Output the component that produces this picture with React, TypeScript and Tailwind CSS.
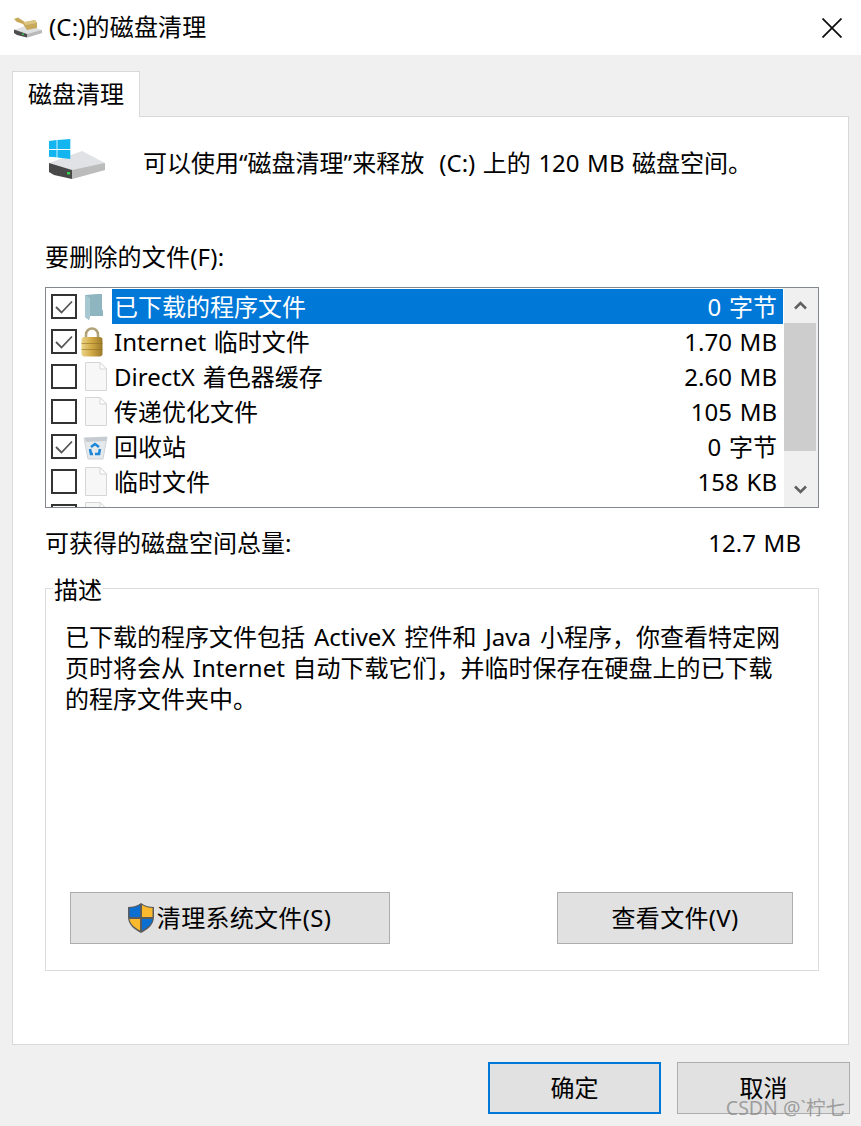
const font = "font-['Noto_Sans','Noto_Sans_CJK_SC',sans-serif]"

function CleanupIcon() {
  return (
    <svg width="30" height="21" viewBox="0 0 30 21" className="shrink-0">
      <path d="M1 13 L15 8 L29 13 L29 16 L15 20.500 L1 16 Z" fill="#dfe0e2" />
      <path d="M1 12.500 L14 17 L14 20.500 L4 18 L1 16 Z" fill="#4d4d4d" />
      <path d="M14 17 L29 13 L29 16 L14 20.500 Z" fill="#b9b9b9" />
      <rect x="9" y="16.500" width="2" height="1.500" fill="#39c24a" />
      <path d="M1 2 L5 0.500 L12 5 L22 3 L24 6 L24 11 L14 13 L10 7 L4 5 Z" fill="#c7a95c" />
      <path d="M10 5.500 L22 3 L24 6 L13 8 Z" fill="#dcc583" />
    </svg>
  )
}

function DriveIcon() {
  return (
    <svg width="58" height="41" viewBox="0 0 58 41" className="shrink-0">
      <path d="M1 24 L34 12 L57 24 L57 31 L24 40 L1 33 Z" fill="#e1e2e5" />
      <path d="M1 24 L24 31 L24 40 L6 36 L1 33 Z" fill="#484848" />
      <path d="M24 31 L57 24 L57 31 L24 40 Z" fill="#bcbcbc" />
      <rect x="19" y="33" width="3" height="2.500" fill="#35d04a" />
      <path d="M1 2 L8.600 1 L8.600 10 L1 10 Z" fill="#12b5f0" />
      <path d="M9.400 1 L22.300 0 L22.300 10 L9.400 10 Z" fill="#12b5f0" />
      <path d="M1 11 L8.600 11 L8.600 18.300 L1 17.800 Z" fill="#12b5f0" />
      <path d="M9.400 11 L22.300 11 L22.300 20 L9.400 18.500 Z" fill="#12b5f0" />
    </svg>
  )
}

function FolderIcon() {
  return (
    <svg width="18" height="26" viewBox="0 0 18 26" className="ml-[8px]">
      <path d="M0 1 L12 0 L17 0 L17 15 L18 17 L18 22 L5 22 L4 26 L0 23 Z" fill="#8fb6c0" />
      <path d="M0 1 L5 4 L5 22 L4 26 L0 23 Z" fill="#a7c8d0" />
    </svg>
  )
}

function LockIcon() {
  return (
    <svg width="22" height="30" viewBox="0 0 22 30" className="ml-[4px]">
      <defs>
        <linearGradient id="lockGold" x1="0" y1="0" x2="1" y2="0">
          <stop offset="0" stopColor="#ecd488" />
          <stop offset="0.5" stopColor="#d0a843" />
          <stop offset="1" stopColor="#9c7a2a" />
        </linearGradient>
      </defs>
      <path d="M5 12 V7.500 A6 6 0 0 1 17 7.500 V12" fill="none" stroke="#b0a278" strokeWidth="2.500" />
      <rect x="0.500" y="10" width="21" height="19.500" rx="3" fill="url(#lockGold)" />
      <rect x="0.500" y="16" width="21" height="1" fill="#8f6f22" opacity="0.6" />
      <rect x="0.500" y="22" width="21" height="1" fill="#8f6f22" opacity="0.6" />
    </svg>
  )
}

function DocIcon() {
  return (
    <svg width="22" height="29" viewBox="0 0 22 29" className="ml-[8px]">
      <path d="M0.500 0.500 H15 L21.500 7 V28.500 H0.500 Z" fill="#f7f7f7" stroke="#d6d6d6" />
      <path d="M15 0.500 V7 H21.500 Z" fill="#ffffff" stroke="#d6d6d6" />
    </svg>
  )
}

function BinIcon() {
  return (
    <svg width="25" height="26" viewBox="0 0 25 26" className="ml-[6px]">
      <path d="M1 4 L24 3 L20 25 L5 25 Z" fill="#e6e9ec" stroke="#cfd3d8" />
      <path d="M2 4 L24 3 L23 7 L3 8 Z" fill="#c6cbd1" />
      <path d="M8 13 L12 10 L16 13 M17 15 L16 20 L12 20 M7 15 L8 20 L10 20" fill="none" stroke="#1e88d8" strokeWidth="2.600" />
    </svg>
  )
}

function ShieldIcon() {
  return (
    <svg width="28" height="30" viewBox="0 0 28 30" className="shrink-0">
      <path d="M14 0 C10 3 5 4 1 4 V14 C1 22 8 27 14 30 C20 27 27 22 27 14 V4 C23 4 18 3 14 0 Z" fill="#5b5b5b" />
      <path d="M13 2 C10 4 6 5 2.500 5 V14 H13 Z" fill="#0a6fd0" />
      <path d="M15 2 C18 4 22 5 25.500 5 V14 H15 Z" fill="#fbb92e" />
      <path d="M2.500 16 H13 V27.500 C8 25 3 21 2.500 16 Z" fill="#fbb92e" />
      <path d="M15 16 H25.500 C25 21 20 25 15 27.500 Z" fill="#0a6fd0" />
    </svg>
  )
}

function Checkbox({ checked }: { checked: boolean }) {
  return (
    <div className="w-[26px] h-[25px] border-2 border-[#333333] bg-white flex items-center justify-center shrink-0">
      {checked && (
        <svg width="18" height="14" viewBox="0 0 18 14">
          <path d="M1 7 L6.500 12.500 L17 1.500" fill="none" stroke="#555555" strokeWidth="1.800" />
        </svg>
      )}
    </div>
  )
}

const rows = [
  { name: '已下载的程序文件', size: '0 字节', checked: true, icon: <FolderIcon />, selected: true },
  { name: 'Internet 临时文件', size: '1.70 MB', checked: true, icon: <LockIcon /> },
  { name: 'DirectX 着色器缓存', size: '2.60 MB', checked: false, icon: <DocIcon /> },
  { name: '传递优化文件', size: '105 MB', checked: false, icon: <DocIcon /> },
  { name: '回收站', size: '0 字节', checked: true, icon: <BinIcon /> },
  { name: '临时文件', size: '158 KB', checked: false, icon: <DocIcon /> },
  { name: '', size: '', checked: false, icon: <DocIcon /> },
]

function Button({ children, className }: { children: React.ReactNode; className: string }) {
  return (
    <button className={'h-[52px] bg-[#e1e1e1] flex items-center justify-center text-[24px] text-black ' + className}>
      {children}
    </button>
  )
}

export default function App() {
  return (
    <div className={font + ' relative w-[861px] h-[1126px] bg-[#f0f0f0] text-[24px] leading-[32px] text-black overflow-hidden flex flex-col'}>
      <div className="h-[55px] bg-white flex items-center pl-[13px] pr-[19px] shrink-0">
        <CleanupIcon />
        <span className="ml-[6px] -mt-[1px] tracking-[0.15px]">(C:)的磁盘清理</span>
        <svg width="20" height="20" viewBox="0 0 20 20" className="ml-auto">
          <path d="M0.500 0.500 L19.500 19.500 M19.500 0.500 L0.500 19.500" stroke="#111" strokeWidth="1.800" />
        </svg>
      </div>

      <div className="ml-[12px] mt-[16px] w-[128px] h-[46px] bg-white border border-b-0 border-[#d9d9d9] flex items-center pl-[15px] pb-[2px] relative z-10 -mb-[1px] shrink-0">
        磁盘清理
      </div>

      <div className="ml-[12px] w-[837px] h-[929px] bg-white border border-[#d9d9d9] pl-[32px] pr-[29px] shrink-0">
        <div className="flex items-start h-[48px] mt-[22px] ml-[3px]">
          <DriveIcon />
          <span className="ml-[37px] mt-[8px] whitespace-pre [word-spacing:1.300px]">可以使用“磁盘清理”来释放  (C:) 上的 120 MB 磁盘空间。</span>
        </div>

        <div className="mt-[54px] tracking-[0.2px]">要删除的文件(F):</div>

        <div className="mt-[14px] h-[221px] border border-[#828790] flex overflow-hidden">
          <div className="flex-1 min-w-0 pt-[1px] pl-[5px] pr-[1px]">
            {rows.map((r, i) => (
              <div key={i} className="h-[35px] flex items-center">
                <Checkbox checked={r.checked} />
                <div className="w-[35px] shrink-0 flex items-center">{r.icon}</div>
                <div className={'flex-1 h-full flex items-center justify-between pl-[2px] pr-[6px] [word-spacing:1.500px] ' + (r.selected ? 'bg-[#0078d7] text-white' : '')}>
                  <span>{r.name}</span>
                  <span>{r.size}</span>
                </div>
              </div>
            ))}
          </div>
          <div className="w-[34px] pr-[2px] bg-[#f0f0f0] flex flex-col shrink-0">
            <div className="h-[35px] flex items-center justify-center">
              <svg width="13" height="9" viewBox="0 0 13 9">
                <path d="M1 7.500 L6.500 2 L12 7.500" fill="none" stroke="#606060" strokeWidth="2.600" />
              </svg>
            </div>
            <div className="h-[128px] bg-[#cdcdcd]" />
            <div className="flex-1" />
            <div className="h-[35px] flex items-center justify-center">
              <svg width="13" height="9" viewBox="0 0 13 9">
                <path d="M1 1.500 L6.500 7 L12 1.500" fill="none" stroke="#606060" strokeWidth="2.600" />
              </svg>
            </div>
          </div>
        </div>

        <div className="mt-[19px] flex justify-between pr-[18px]">
          <span>可获得的磁盘空间总量:</span>
          <span className="[word-spacing:1.500px]">12.7 MB</span>
        </div>

        <div className="relative mt-[29px] h-[383px] border border-[#dcdcdc] pl-[19px] pr-[20px] pt-[32px]">
          <span className="absolute left-[7px] -top-[15px] bg-white px-[1px]">描述</span>
          <p className="leading-[31px] whitespace-nowrap">
            <span className="[word-spacing:2.700px]">已下载的程序文件包括 ActiveX 控件和 Java 小程序，你查看特定网</span>
            <br />
            <span className="[word-spacing:1.500px]">页时将会从 Internet 自动下载它们，并临时保存在硬盘上的已下载</span>
            <br />
            的程序文件夹中。
          </p>
          <div className="mt-[178px] ml-[5px] flex justify-between pr-[5px]">
            <Button className="w-[320px] border border-[#adadad] pr-[2px]">
              <ShieldIcon />
              <span className="ml-[2px] tracking-[0.3px]">清理系统文件(S)</span>
            </Button>
            <Button className="w-[236px] border border-[#adadad] tracking-[0.3px]">查看文件(V)</Button>
          </div>
        </div>
      </div>

      <div className="mt-[17px] flex justify-end gap-[16px] pr-[11px]">
        <Button className="w-[173px] border-2 border-[#0078d7]">确定</Button>
        <Button className="w-[173px] border border-[#adadad]">取消</Button>
      </div>

      <span className="absolute right-[16px] top-[1095px] text-[19.500px] leading-[26px] text-[#8a8a8a]/80">CSDN @`柠七</span>
    </div>
  )
}
